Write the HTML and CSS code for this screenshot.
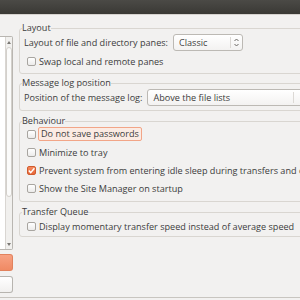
FILE: index.html
```html
<!DOCTYPE html>
<html lang="en">
<head>
    <meta charset="UTF-8">
    <title>Settings - Interface</title>
    <link rel="stylesheet" href="styles.css">
</head>
<body>
    <div class="titlebar"></div>

    <div class="window">
        <aside class="sidebar">
            <div class="tree">
                <div class="tree-list"></div>
                <div class="scrollbar">
                    <span class="arrow arrow-up"></span>
                    <span class="thumb"></span>
                    <span class="arrow arrow-down"></span>
                </div>
            </div>
            <div class="btn btn-primary"></div>
            <div class="btn"></div>
        </aside>

        <main class="pane">
            <fieldset class="group">
                <legend>Layout</legend>
                <div class="row field-row">
                    <span>Layout of file and directory panes:</span>
                    <div class="combo combo-layout">
                        <span class="combo-text">Classic</span>
                        <span class="combo-arrows">
                            <svg width="5" height="9" viewBox="0 0 5 9"><path d="M0.5 3 L2.5 1 L4.5 3 M0.5 6 L2.5 8 L4.5 6" fill="none" stroke="#6b6965" stroke-width="1"/></svg>
                        </span>
                    </div>
                </div>
                <label class="row check-row"><span class="check"></span><span>Swap local and remote panes</span></label>
            </fieldset>

            <fieldset class="group group-log">
                <legend>Message log position</legend>
                <div class="row field-row">
                    <span>Position of the message log:</span>
                    <div class="combo combo-log">
                        <span class="combo-text">Above the file lists</span>
                        <span class="combo-arrows"></span>
                    </div>
                </div>
            </fieldset>

            <fieldset class="group group-behaviour">
                <legend>Behaviour</legend>
                <label class="row check-row"><span class="check"></span><span class="focus">Do not save passwords</span></label>
                <label class="row check-row"><span class="check"></span><span>Minimize to tray</span></label>
                <label class="row check-row"><span class="check checked"><svg width="9" height="9" viewBox="0 0 9 9"><path d="M1.8 4.6 L3.7 6.6 L7.4 2.2" fill="none" stroke="#fff" stroke-width="1.4"/></svg></span><span>Prevent system from entering idle sleep during transfers and other operations</span></label>
                <label class="row check-row"><span class="check"></span><span>Show the Site Manager on startup</span></label>
            </fieldset>

            <fieldset class="group group-queue">
                <legend>Transfer Queue</legend>
                <label class="row check-row"><span class="check"></span><span>Display momentary transfer speed instead of average speed</span></label>
            </fieldset>
        </main>
    </div>
</body>
</html>
```

FILE: styles.css
```css
body {
    margin: 0;
    width: 300px;
    height: 300px;
    overflow: hidden;
    background: #f2f1f0;
    font-family: 'Open Sans', 'DejaVu Sans', sans-serif;
    font-size: 9.1px;
    color: #3c3c3c;
}
.titlebar {
    height: 14px;
    background: linear-gradient(#4b4a46, #3a3935);
    border-bottom: 1px solid #d6d3cf;
}
.window {
    display: flex;
    gap: 6px;
    height: 282px;
    border-bottom: 1px solid #c8c5c0;
}
.sidebar {
    flex: none;
    width: 13px;
    padding-top: 21px;
    display: flex;
    flex-direction: column;
}
.tree {
    height: 214px;
    box-sizing: border-box;
    display: flex;
    background: #fff;
    border: 1px solid #b9b6b1;
    border-left: none;
    border-radius: 0 2px 2px 0;
}
.tree-list {
    width: 5px;
}
.scrollbar {
    flex: 1;
    display: flex;
    flex-direction: column;
    align-items: center;
    padding: 4px 0 3px;
    border-left: 1px solid #d9d6d2;
    background: #f1f0ee;
}
.arrow {
    width: 0;
    height: 0;
    border-left: 2px solid transparent;
    border-right: 2px solid transparent;
}
.arrow-up {
    border-bottom: 3px solid #7a7874;
}
.arrow-down {
    border-top: 3px solid #7a7874;
}
.thumb {
    width: 4px;
    height: 148px;
    margin: 3px 0 auto;
    border: 1px solid #d3d0cb;
    border-radius: 3px;
    background: #fbfbfa;
}
.btn {
    height: 17px;
    box-sizing: border-box;
    margin-top: 4px;
    border: 1px solid #b7b4af;
    border-left: none;
    border-radius: 0 3px 3px 0;
    background: linear-gradient(#ffffff, #f1f0ef);
}
.btn + .btn {
    margin-top: 5px;
}
.btn-primary {
    border-color: #e2825d;
    background: linear-gradient(#f7a283, #f08a64);
}
.pane {
    flex: none;
    width: 330px;
    padding-top: 9px;
    display: flex;
    flex-direction: column;
}
.group {
    margin: 0;
    padding: 0 0 3px 2px;
    min-width: 0;
    border: 1px solid #d9d6d1;
    border-radius: 3px;
}
.group legend {
    padding: 0;
    line-height: 8px;
}
.group-log {
    margin-top: 5px;
    padding-bottom: 4px;
}
.group-behaviour {
    margin-top: 6px;
    padding-bottom: 4px;
}
.group-queue {
    margin-top: 6px;
    padding-bottom: 1px;
}
.row {
    height: 18px;
    display: flex;
    align-items: center;
    gap: 3px;
    padding-left: 2px;
    white-space: nowrap;
}
.field-row {
    gap: 5px;
}
.group > .row:first-of-type {
    margin-top: 1px;
}
.row + .row {
    margin-top: 2px;
}
.group-behaviour .row,
.group-behaviour .row:first-of-type,
.group-behaviour .row + .row {
    margin-top: 0;
}
.check-row {
    padding-left: 5px;
}
.check {
    flex: none;
    width: 9px;
    height: 9px;
    box-sizing: border-box;
    border: 1px solid #a8a5a0;
    border-radius: 2px;
    background: linear-gradient(#ffffff, #ecebea);
    display: flex;
}
.check svg {
    margin: -1px;
}
.check.checked {
    border-color: #d05a2c;
    background: linear-gradient(#f58a5e, #e8683a);
}
.focus {
    margin-left: -1px;
    padding: 1px 2px;
    line-height: 10px;
    border: 1px solid #f2a587;
    border-radius: 2px;
    background: #fbebe3;
}
.combo {
    height: 17px;
    box-sizing: border-box;
    display: flex;
    align-items: center;
    border: 1px solid #bcb9b4;
    border-radius: 3px;
    background: linear-gradient(#ffffff, #f3f2f1);
}
.combo-text {
    flex: 1;
    padding-left: 5px;
}
.combo-arrows {
    align-self: stretch;
    display: flex;
    align-items: center;
    justify-content: center;
    margin: 2px 0;
    border-left: 1px solid #dcd9d5;
}
.combo-layout {
    width: 70px;
}
.combo-layout .combo-arrows {
    width: 11px;
}
.combo-log {
    width: 162px;
}
.combo-log .combo-arrows {
    width: 14px;
}
```
